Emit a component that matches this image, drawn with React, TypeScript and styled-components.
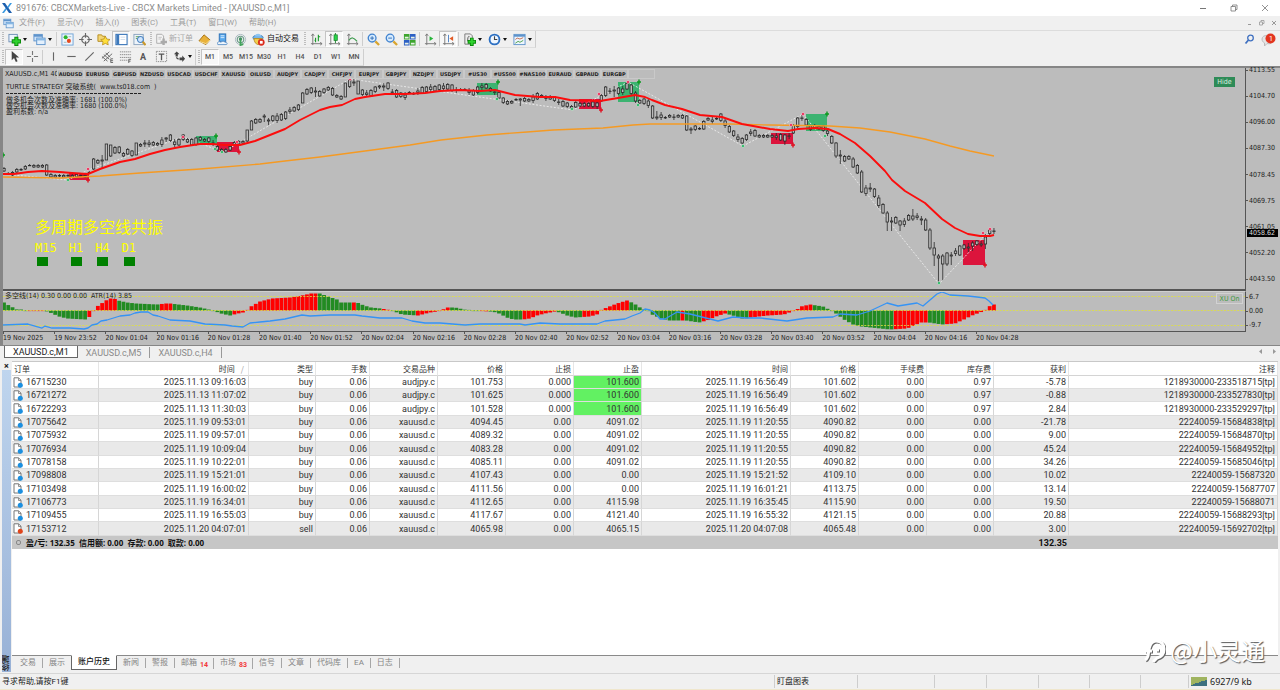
import React from 'react';
import styled, { createGlobalStyle, css } from 'styled-components';

const Global = createGlobalStyle`
  *, *::before, *::after { box-sizing: border-box; }
  body {
    margin: 0;
    background: #f0f0f0;
    font: 8px/10px Roboto, "Noto Sans CJK SC", sans-serif;
    color: #333;
  }
  button { font: inherit; color: inherit; background: none; border: 0; padding: 0; margin: 0; }
  a { color: inherit; text-decoration: none; }
  svg { display: block; }
`;

const CHART_FONT = '"DejaVu Sans Condensed", "DejaVu Sans", "Noto Sans CJK SC", sans-serif';

const Window = styled.div`
  display: flex;
  flex-direction: column;
  min-height: 100vh;
  position: relative;
  border-bottom: 1px solid #efe6cc;
`;

/* ---------- title and menu ---------- */

const TitleBar = styled.header`
  display: flex;
  align-items: center;
  height: 16px;
  padding-left: 2px;
  background: #fff;
  color: #8c8c8c;
`;
const Title = styled.h1`
  margin: 0 auto 0 4px;
  font: 400 9px/12px Roboto, sans-serif;
`;
const CaptionButton = styled.button`
  display: grid;
  place-items: center;
  width: 31px;
  height: 16px;
`;
const MenuBar = styled.nav`
  display: flex;
  align-items: center;
  height: 15px;
  padding-left: 3px;
  border-bottom: 1px solid #dcdcdc;
  color: #9a9a9a;
`;
const MenuItem = styled.button`
  margin-left: 12px;
  &:first-of-type { margin-left: 5px; }
`;
const MdiButtons = styled.div`
  display: flex;
  margin-left: auto;
`;
const MdiButton = styled.button`
  display: grid;
  place-items: center;
  width: 12px;
  height: 12px;
`;

/* ---------- toolbars ---------- */

const ToolRow = styled.div<{ $h: number }>`
  display: flex;
  align-items: center;
  height: ${p => p.$h}px;
`;
const ToolGroup = styled.div`
  display: flex;
  align-items: center;
  height: 17px;
  border-right: 1px solid #cfcfcf;
  border-bottom: 1px solid #dedede;
`;
const Grip = styled.span`
  width: 2px;
  height: 14px;
  margin: 0 1px 0 2px;
  background: repeating-linear-gradient(#bdbdbd 0 1px, #f0f0f0 1px 2px);
`;
const Sep = styled.span`
  width: 1px;
  height: 14px;
  margin: 0 1px;
  background: #cdcdcd;
`;
const ToolButton = styled.button<{ $on?: boolean; $w?: number }>`
  display: flex;
  align-items: center;
  justify-content: center;
  gap: 2px;
  flex: none;
  width: ${p => p.$w ?? 18}px;
  height: 16px;
  border: 1px solid transparent;
  ${p => p.$on && css`
    background: #f8f8f8;
    border-color: #c4c4c4 #fff #fff #c4c4c4;
  `}
`;
const TextTool = styled(ToolButton)<{ $dim?: boolean }>`
  width: auto;
  padding: 0 ${p => (p.$dim ? 1 : 2)}px;
  color: ${p => (p.$dim ? '#a8a8a8' : '#111')};
`;
const Period = styled(ToolButton)`
  font: 500 7px/10px Roboto, sans-serif;
  color: #555;
`;
const LetterTool = styled(ToolButton)`
  font: 700 9px/10px Roboto, sans-serif;
  color: #555;
`;
const Caret = styled.span`
  border: 2px solid transparent;
  border-top: 3px solid #111;
  border-bottom: 0;
`;
const ToolEnd = styled.div`
  display: flex;
  align-items: center;
  gap: 6px;
  margin-left: auto;
  padding-right: 4px;
`;

/* ---------- chart window ---------- */

const ChartWindow = styled.main`
  display: grid;
  grid-template-columns: minmax(0, 1fr) 34px;
  grid-template-rows: 223px 41px 13px;
  border: solid #868686;
  border-width: 2px 0 1px 3px;
  background: #bcbcbc;
  color: #222;
  font: 7px/8px ${CHART_FONT};
`;
const Pane = styled.section<{ $last?: boolean }>`
  position: relative;
  overflow: hidden;
  border-right: 1px solid #555;
  border-bottom: ${p => (p.$last ? '1px' : '2px')} solid #555;
  border-top: ${p => (p.$last ? '1px' : '0')} solid #d0d0d0;
`;
const PlotSvg = styled.svg`
  position: absolute;
  inset: 0;
  width: 100%;
  height: 100%;
`;
const ChartHeading = styled.div`
  position: absolute;
  left: 2px;
  top: 1px;
  right: 0;
  display: flex;
  white-space: pre;
`;
const SymbolName = styled.span`
  width: 52px;
  line-height: 10px;
`;
const SymbolStrip = styled.div`
  display: grid;
  grid-template-columns: repeat(22, 1fr);
  width: 598px;
`;
const SymbolButton = styled.button`
  height: 10px;
  border: 1px solid #c9c9c9;
  font: 700 5px/8px "DejaVu Sans", sans-serif;
  color: #222;
`;
const Strategy = styled.div`
  position: absolute;
  left: 3px;
  top: 15px;
  white-space: pre;
`;
const StrategyTitle = styled.p`
  margin: 0;
  line-height: 8px;
`;
const StrategyRule = styled.div`
  width: 135px;
  height: 1px;
  margin: 2px 0 3px;
  background: repeating-linear-gradient(90deg, #222 0 3px, transparent 3px 4px);
`;
const StrategyLine = styled.p`
  margin: 0;
  line-height: 6px;
`;
const Resonance = styled.div`
  position: absolute;
  left: 32px;
  top: 148px;
  color: #ff0;
`;
const ResonanceTitle = styled.p`
  margin: 0;
  font: 400 16px/20px "Noto Sans CJK SC", sans-serif;
`;
const FrameList = styled.ul`
  display: flex;
  gap: 12px;
  margin: 5px 0 0;
  padding: 0;
  list-style: none;
  font: 12px/14px "DejaVu Sans Mono", monospace;
`;
const Frame = styled.li`
  &::after {
    content: "";
    display: block;
    width: 11px;
    height: 9px;
    margin: 2px 0 0 2px;
    background: #008000;
  }
`;
const HideButton = styled.button`
  position: absolute;
  right: 10px;
  top: 9px;
  width: 21px;
  height: 10px;
  background: #2e8b57;
  color: #dcefe2;
`;
const XuButton = styled.button`
  position: absolute;
  right: 2px;
  top: 1px;
  width: 27px;
  height: 11px;
  border: 1px solid #d2d2d2;
  background: #bcbcbc;
  color: #3c9a3c;
`;
const IndicatorLabel = styled.p`
  position: absolute;
  left: 2px;
  top: 0;
  margin: 0;
  white-space: pre;
`;
const PriceAxis = styled.div`
  position: relative;
  display: flex;
  flex-direction: column;
  justify-content: space-between;
  height: 213px;
  line-height: 4px;
`;
const RangeAxis = styled(PriceAxis)`
  height: 36px;
  padding: 4px 0 0;
`;
const Tick = styled.span`
  display: flex;
  align-items: center;
  gap: 1px;
  &::before { content: ""; width: 2px; height: 1px; background: #555; }
`;
const LastPrice = styled.span`
  position: absolute;
  left: 1px;
  top: 161px;
  width: 31px;
  padding-left: 2px;
  line-height: 8px;
  background: #000;
  color: #ddd;
`;
const TimeAxis = styled.div`
  grid-column: 1 / -1;
  display: grid;
  grid-template-columns: repeat(24, 1fr);
  padding-right: 48px;
  white-space: nowrap;
`;
const TimeLabel = styled.span`
  line-height: 8px;
  &::before { content: ""; display: block; width: 1px; height: 2px; background: #555; }
`;

const ChartTabs = styled.nav`
  display: flex;
  align-items: flex-start;
  height: 15px;
  padding-left: 4px;
  font: 9px/12px Roboto, sans-serif;
`;
const ChartTab = styled.button<{ $on?: boolean }>`
  height: 11px;
  margin: 1px 0;
  padding: 0 8px;
  border-right: 1px solid #999;
  color: #8a8a8a;
  ${p => p.$on && css`
    height: 12px;
    margin: 0;
    border: 1px solid #666;
    border-top: 0;
    background: #fff;
    color: #222;
  `}
`;
const Scrollers = styled.div`
  display: flex;
  gap: 9px;
  margin: 3px 4px 0 auto;
`;

/* ---------- terminal ---------- */

const Terminal = styled.section`
  flex: 1;
  display: grid;
  grid-template-columns: 12px minmax(0, 1fr);
  margin-right: 2px;
`;
const Rail = styled.aside`
  display: flex;
  flex-direction: column;
  padding: 0 1px 1px 2px;
`;
const RailClose = styled.button`
  height: 9px;
  font: 700 9px/8px Roboto, sans-serif;
  color: #222;
`;
const RailName = styled.div`
  flex: 1;
  padding-top: 1px;
  writing-mode: vertical-rl;
  transform: rotate(180deg);
  font-weight: 500;
  background: linear-gradient(#98b1d6, #bfd5ee);
  color: #222;
`;
const Sheet = styled.div`
  display: flex;
  flex-direction: column;
  background: #fff;
  border-top: 1px solid #c8c8c8;
`;
const Table = styled.table`
  width: 100%;
  table-layout: fixed;
  border-collapse: separate;
  border-spacing: 0;
  font: 9px/12px Roboto, sans-serif;
`;
const Th = styled.th`
  height: 14px;
  padding: 0 2px;
  border-right: 1px solid #e6e6e6;
  border-bottom: 1px solid #d4d4d4;
  font: 400 8px/12px "Noto Sans CJK SC", sans-serif;
  text-align: right;
  &:first-child { text-align: left; }
`;
const SortMark = styled.span`
  padding: 0 2px 0 6px;
  color: #999;
`;
const Row = styled.tr`
  height: 13px;
  &:nth-child(3n) { height: 14px; }
  &:nth-child(even) { background: #e9e9e9; }
`;
const Td = styled.td<{ $hit?: boolean }>`
  padding: 0 2px 0 0;
  border-right: 1px solid #d6d6d6;
  border-bottom: 1px solid #dedede;
  text-align: right;
  white-space: nowrap;
  overflow: hidden;
  ${p => p.$hit && css`background: #62f162;`}
`;
const OrderCell = styled.span`
  display: flex;
  align-items: center;
  gap: 3px;
  padding-left: 1px;
`;
const SumRow = styled.tr`
  height: 13px;
  background: #c6c6c6;
  font: 700 9px/12px Roboto, "Noto Sans CJK SC", sans-serif;
  color: #111;
`;
const SumCell = styled.td`
  padding: 0 2px 0 0;
  text-align: right;
`;
const SumText = styled.span`
  display: flex;
  align-items: center;
  gap: 5px;
  padding-left: 4px;
  white-space: pre;
  font: 700 8px/12px "Noto Sans", "Noto Sans CJK SC", sans-serif;
`;
const SumDot = styled.i`
  width: 5px;
  height: 5px;
  border: 1px solid #888;
  border-radius: 2px;
`;
const BottomTabs = styled.nav`
  display: flex;
  align-items: center;
  height: 18px;
  margin-top: auto;
  padding-bottom: 3px;
  border-top: 1px solid #8a8a8a;
  background: #f0f0f0;
  color: #858585;
`;
const BottomTab = styled.a<{ $on?: boolean }>`
  display: flex;
  padding: 0 6px;
  border-right: 1px solid #a6a6a6;
  &:first-child { padding-left: 8px; }
  ${p => p.$on && css`
    align-self: flex-start;
    margin-top: -1px;
    margin-left: -1px;
    padding: 1px 6px 2px;
    border: 1px solid #666;
    border-top: 1px solid #fff;
    background: #fff;
    color: #111;
    font-weight: 500;
  `}
`;
const Count = styled.sup`
  margin: 3px -1px 0 3px;
  font: 700 7px/8px Roboto, sans-serif;
  color: #f23a3a;
`;

const StatusBar = styled.footer`
  display: flex;
  align-items: center;
  height: 16px;
  border-top: 1px solid #d6d6d6;
  color: #222;
`;
const StatusCell = styled.span<{ $w?: number }>`
  display: flex;
  align-items: center;
  gap: 2px;
  flex: ${p => (p.$w ? `0 0 ${p.$w}px` : '1')};
  height: 13px;
  padding-left: 2px;
  border-left: 1px solid #cdcdcd;
  &:first-child { border-left: 0; }
`;
const Traffic = styled.span`
  font: 9px/12px "Noto Sans", sans-serif;
`;
const Watermark = styled.div`
  position: absolute;
  right: 15px;
  bottom: 24px;
  display: flex;
  align-items: center;
  gap: 4px;
  color: #fff;
  font: 24px/30px "Noto Sans CJK SC", sans-serif;
  text-shadow: 1px 1px 1px #555;
`;

/* ---------- chart data ---------- */

const STEP = 4.267;
const barX = (i: number) => 4 + STEP * i;

// high, low and, for long shadows, the body's top and bottom
type Bar = [number, number, number?, number?];
const bars: Bar[] = [
  [167,172],[172,175],[171,176],[168,173],[168,171],[165,170],[164,166],[164,168],[164,168],[164,168],
  [164,176,165,175],[173,178],[174,178],[174,177],[174,178],[174,177],[174,178],[173,178],[174,177],[174,178],
  [171,174],[158,170,159,169],[159,164],[155,168,160,161],[144,160,144,160],[145,157,145,156],[146,154],[146,154],[152,157],[148,155],
  [150,157],[143,155,143,155],[143,147],[140,147,143,144],[140,147],[141,146],[142,146],[137,147],[137,142,138,139],[134,142],
  [139,147],[138,146],[134,141],[138,143],[138,146],[137,146],[136,141],[138,142],[137,143],[140,146],
  [145,151],[148,152],[148,153],[145,151],[141,146],[140,145],[140,144],[130,142,130,141],[120,130,121,130],[118,124],
  [118,123],[114,122,116,117],[118,125,120,121],[115,122],[113,123],[113,121],[111,120],[107,114],[106,112],[104,111],
  [92,103,93,103],[88,95],[87,94],[87,97,91,92],[90,97],[88,94],[86,91],[87,96],[94,98],[95,100],
  [83,97,83,97],[79,88],[79,86,82,83],[81,94,81,94],[89,96],[90,97],[89,97],[86,93],[85,89,86,87],[83,91,86,87],
  [82,90],[89,95],[89,98],[92,98],[92,100],[91,94],[92,95],[88,95],[86,94],[86,93],
  [84,92],[85,92],[84,91],[83,91],[83,90],[84,92],[87,93],[88,91],[88,91],[88,95],
  [89,96],[86,94],[83,90],[83,89],[87,92],[89,95],[91,99],[97,104],[100,105],[100,104],
  [98,101],[98,106,99,100],[97,102],[98,102],[94,103],[92,100],[94,98],[95,101],[95,100],[96,102],
  [99,105],[100,107],[102,108],[105,109],[101,108],[102,107],[102,107],[102,107],[101,108],[100,109],
  [94,102],[86,97],[88,94],[86,97,90,91],[87,95],[86,95],[82,90],[84,95],[91,103,93,101],[99,104],
  [98,105],[98,108],[105,119,106,118],[111,120,117,118],[112,120],[116,119],[114,118],[114,120],[114,118],[114,119],
  [115,131,116,130],[127,134,129,130],[125,131],[127,130],[120,130],[117,121],[117,124],[117,120],[113,122],[118,128],
  [125,133],[130,137],[134,142],[137,144],[134,141],[129,136],[129,137],[134,138],[134,138],[134,138],
  [134,138],[133,140],[133,141],[134,145,135,141],[133,139],[124,134],[117,128],[115,121],[118,126],[125,131],
  [124,129],[125,130],[125,132],[128,136],[135,144],[142,158,143,156],[150,164,155,156],[155,162],[155,160],[157,168,159,167],
  [164,174],[170,193,172,192],[185,196],[183,192,188,189],[188,198],[195,208],[203,214],[211,231,213,222],[217,231,221,222],[216,224],
  [220,231,221,225],[218,227],[214,221],[209,221,216,219],[213,220],[216,225,219,220],[218,231,220,230],[228,250,230,248],[242,266,248,255],[254,284,256,258],
  [254,280,256,264],[252,266,253,264],[252,265,255,256],[248,256],[245,256,246,255],[244,250],[243,252,247,248],[241,251,243,246],[240,246],[241,247,244,245],
  [234,249,237,244],[229,235],[228,234],
];

// oscillator: x position and signed height in pixels
const oscKeys: [number, number][] = [
  [4,8],[9,5],[13,3],[17,1],[21,1],[25,0],[44,0],[50,-2],[59,-6],[67,-8],[85,-9],[89,-7],[93,-1],[97,4],[106,10],[110,12],
  [114,12],[118,10],[127,8],[136,7],[157,6],[166,7],[170,7],[187,5],[200,3],[213,0],[221,-3],[230,-5],[238,-3],[243,-2],
  [247,0],[251,4],[260,9],[272,12],[290,13],[302,15],[311,17],[321,17],[325,15],[331,13],[337,11],[341,8],[357,8],
  [364,5],[371,3],[381,2],[392,0],[397,-2],[402,-4],[418,-5],[430,-2],[437,-1],[443,1],[447,3],[455,3],[464,1],[470,0],[490,-1],
  [497,-2],[503,-5],[509,-8],[515,-9],[523,-9],[530,-8],[537,-5],[545,-3],[555,-1],[560,-2],[567,-5],[575,-7],[590,-6],
  [597,-4],[602,1],[607,3],[617,7],[627,10],[634,7],[640,3],[644,1],[648,0],[652,-4],[661,-8],[669,-10],[686,-10],[699,-12],
  [707,-10],[716,-6],[725,-3],[733,-5],[742,-8],[746,-8],[750,-7],[768,-5],[784,-4],[792,-1],[797,1],[801,4],[810,6],[823,4],
  [831,0],[836,-3],[844,-9],[853,-14],[861,-16],[890,-19],[907,-18],[921,-12],[929,-12],[942,-14],[955,-13],[964,-9],[972,-5],
  [980,-2],[985,0],[989,4],[993,6],[998,6],
];
// ranges of x where the oscillator is drawn red
const redRanges: [number, number][] = [
  [26,44],[87,116],[159,173],[232,316],[350,357],[382,389],[415,449],[478,490],[522,557],[582,628],[680,683],[702,726],
  [749,811],[893,926],[943,1000],
];
const oscAt = (x: number) => {
  const k = oscKeys.findIndex(p => p[0] >= x);
  if (k <= 0) return oscKeys[0][1];
  const [x0, y0] = oscKeys[k - 1];
  const [x1, y1] = oscKeys[k];
  return y0 + ((y1 - y0) * (x - x0)) / (x1 - x0);
};

const fastLine =
  '3,174 14,174 28,172 42,171 60,172 72,173 88,174 100,169 120,162 135,159 150,154 165,150 180,147 200,144 212,144 225,145 240,145 255,141 270,135 285,129 300,120 320,110 330,107 342,105 355,99 365,97 385,94 405,94 425,93 440,91 460,90 480,91 495,90 503,92 515,95 540,97 555,97 570,100 600,101 618,98 635,95 645,97 652,100 665,105 682,109 700,115 722,117 742,124 770,129 788,131 798,129 815,128 828,129 840,134 855,143 870,156 885,171 892,180 905,191 925,203 942,219 955,228 968,234 980,236 990,236 994,235';
const slowLine =
  '3,177 60,178 100,176 140,173 200,169 260,164 285,161 320,157 350,153 380,149 410,145 441,140 487,135 527,132 553,130 603,128 633,125 650,124 730,124 770,125 830,126 860,128 890,132 925,139 950,146 970,151 994,156';
const atrLine =
  '3,325 28,324 42,328 45,326 52,328 70,328 84,329 88,328 92,325 97,324 101,321 107,320 120,316 130,315 135,313 141,312 148,312 153,315 158,316 170,320 190,321 205,324 225,325 232,326 243,327 250,323 260,322 270,321 285,319 302,315 310,316 330,315 355,315 362,316 380,318 402,318 412,321 425,323 440,323 465,325 480,324 520,324 525,325 540,323 560,324 597,324 605,321 625,319 632,316 640,313 645,309 650,310 655,313 660,319 665,319 677,312 690,314 702,317 718,321 733,317 747,318 760,318 787,321 807,318 833,317 840,314 857,315 870,311 887,303 898,306 917,303 923,306 937,294 942,292 950,295 968,296 977,297 985,298 989,301 993,305';
const zigzag = '3,174 68,180 88,170 183,137 223,152 350,79 573,110 628,82 743,146 803,114 939,284 991,229';

const zones: [number, number, number, number, boolean][] = [
  [69,173,20,7,false],[196,136,21,9,true],[217,142,22,10,false],[477,83,21,12,true],[579,99,22,10,false],
  [618,82,21,20,true],[771,133,22,11,false],[806,114,21,17,true],[963,240,22,25,false],
];
const crosses: [number, number, boolean][] = [
  [3,155,true],[216,136,true],[498,82,true],[639,82,true],[827,114,true],
  [88,180,false],[239,152,false],[601,110,false],[793,145,false],[985,265,false],
];
const dots: [number, number, boolean][] = [
  [68,180,true],[215,149,true],[222,152,true],[497,99,true],[572,109,true],[638,105,true],[743,146,true],[825,136,true],[939,283,true],
  [88,169,false],[183,137,false],[237,142,false],[350,79,false],[599,94,false],[628,82,false],[791,125,false],[803,114,false],[983,233,false],[990,229,false],
];

const PricePlot = () => (
  <PlotSvg aria-hidden="true">
    <g transform="translate(-3 -68)">
      {zones.map(([x, y, w, h, up]) => (
        <rect key={x} x={x} y={y} width={w} height={h} fill={up ? '#3cb371' : '#dc143c'} />
      ))}
      <polyline points={zigzag} fill="none" stroke="#ececec" strokeWidth="0.9" strokeDasharray="2 1.6" />
      {bars.map(([hi, lo, top, bottom], i) => {
        const span = lo - hi;
        const a = top ?? hi + (span > 5 ? [1, 3, 1.5][i % 3] : 1.4);
        const b = bottom ?? lo - (span > 5 ? [1.5, 1, 2.5][(i * 2) % 3] : 1);
        const x = barX(i);
        return (
          <g key={i} stroke="#2a2a2a" strokeWidth="0.8" fill="#bcbcbc">
            <path d={`M${x} ${hi}V${lo}`} />
            <rect x={x - 1.2} y={a} width="2.4" height={Math.max(b - a, 0.4)} />
          </g>
        );
      })}
      <polyline points={slowLine} fill="none" stroke="#f59a23" strokeWidth="1.3" />
      <polyline points={fastLine} fill="none" stroke="#fb0d0d" strokeWidth="1.9" strokeLinejoin="round" />
      {crosses.map(([x, y, up]) => (
        <path key={`${x}-${y}`} d={`M${x - 2} ${y}h4M${x} ${y - 2.5}v5`} stroke={up ? '#0a9a1e' : '#e01020'} strokeWidth="1.4" />
      ))}
      {dots.map(([x, y, up]) => (
        <circle key={`${x}-${y}`} cx={x} cy={y} r="1.5" fill={up ? '#16b85a' : '#f0184a'} stroke="#e6dede" strokeWidth="0.6" />
      ))}
    </g>
  </PlotSvg>
);

const OscPlot = () => (
  <PlotSvg aria-hidden="true">
    <g transform="translate(-3 -292)">
      {bars.map((_, i) => {
        const x = barX(i);
        const v = oscAt(x);
        const red = redRanges.some(([a, b]) => x >= a && x <= b);
        const h = Math.max(Math.abs(v), 0.6);
        return <rect key={i} x={x - 1.9} y={v > 0 ? 310.5 - h : 310.5} width="3.8" height={h} fill={red ? '#ff0000' : '#228b22'} />;
      })}
      <path d="M3 296.500H3000M3 310.500H3000M3 325.500H3000" stroke="#e2e23c" strokeWidth="0.8" strokeDasharray="2 1.3" />
      <polyline points={atrLine} fill="none" stroke="#3593f5" strokeWidth="1.3" strokeLinejoin="round" />
    </g>
  </PlotSvg>
);

/* ---------- icons ---------- */

const Icon = ({ children, s = 13 }: { children: React.ReactNode; s?: number }) => (
  <svg width={s} height={s} viewBox="0 0 14 14" fill="none" aria-hidden="true">{children}</svg>
);
const axes = <path d="M3 1v12M1 11.500h12M1.500 3 3 1l1.500 2M11 10l2 1.500-2 1.500" stroke="#777" />;
const icons: Record<string, React.ReactNode> = {
  newChart: <><rect x="1" y="1.500" width="9" height="8" fill="#eef6ff" stroke="#6d8fb5" /><path d="M9 4v10M4 9h10" stroke="#0a8a0a" strokeWidth="4.400" /><path d="M9 5v8M5 9h8" stroke="#2fd22f" strokeWidth="2.400" /></>,
  profiles: <><rect x="1" y="1.500" width="9" height="7" fill="#cfe4fa" stroke="#5e93cb" /><path d="M1 3h9" stroke="#5e93cb" strokeWidth="2" /><rect x="4" y="5.500" width="9" height="7" fill="#e4f0fc" stroke="#5e93cb" /><path d="M4 7h9" stroke="#86b8e6" strokeWidth="2" /></>,
  market: <><rect x="1" y="1" width="12" height="12" fill="#eef5fd" stroke="#6fa3d6" /><circle cx="5" cy="4.500" r="2.200" fill="#2db52d" /><circle cx="8.500" cy="8.500" r="2.200" fill="#e54a1f" /><path d="M8 4h3M3 10h3" stroke="#9bb" /></>,
  target: <><circle cx="7" cy="7" r="4" stroke="#666" strokeWidth="1.300" /><path d="M7 0v5M7 9v5M0 7h5M9 7h5" stroke="#666" strokeWidth="1.200" /></>,
  favorites: <><path d="M1 2h4l1 1.500h3V9H1z" fill="#f4d673" stroke="#b48a1e" /><path d="m9 3.500 1.600 3 3.400.500-2.500 2.400.600 3.400L9 11.200l-3.100 1.600.600-3.400L4 7l3.400-.500z" fill="#ffdf3a" stroke="#b48a1e" strokeWidth=".8" /></>,
  navigator: <><rect x="1" y="1.500" width="12" height="11" fill="#fff" stroke="#3e79bb" strokeWidth="1.200" /><path d="M3 2v10" stroke="#3e79bb" strokeWidth="3" /><path d="M6 4.500h5M6 7h5" stroke="#cfdcea" /></>,
  tester: <><rect x="1" y="1.500" width="10" height="11" fill="#eef4fa" stroke="#8aa4be" /><path d="M3 4h5M3 6h3" stroke="#5b9d4c" /><circle cx="8" cy="7" r="3.200" fill="#cfe5fb" stroke="#4d86c4" strokeWidth="1.200" /><path d="m10.500 9.500 3 3.500" stroke="#c9982c" strokeWidth="2.400" /></>,
  order: <><path d="M2 1.500h6l2 2V12H2z" fill="#f4f4f4" stroke="#a5a5a5" /><path d="M4 5h4M4 7h3" stroke="#bbb" /><path d="M10 6.500v7.500M6.500 10.500h7.500" stroke="#aaa" strokeWidth="2.800" /></>,
  gold: <><path d="M1 8.500 6.500 2 13 7.500l-4.500 5z" fill="#e8b13a" stroke="#a56f10" /><path d="m1.500 9 7 2.500L13 7.500" stroke="#fbe39a" /></>,
  vps: <><rect x="3.500" y="1" width="7" height="8" fill="#58a8ec" stroke="#2a6fb5" /><path d="M5 3h4M5 5h4" stroke="#dff0ff" /><path d="M2 12.500c-1.500-3 2-4 3-2.500 2-2 4-1 4.500 0 3-.500 3 2.500 1.500 2.500z" fill="#eef5fc" stroke="#5f93c9" /></>,
  signal: <><circle cx="7" cy="7" r="5.500" stroke="#a9b8bf" /><circle cx="7" cy="7" r="3.500" stroke="#6c9a88" strokeWidth="1.200" /><circle cx="7" cy="6.500" r="1.800" fill="#3f8f5f" /><path d="M7 7v6l3-1" stroke="#44a35c" strokeWidth="2" /></>,
  auto: <><ellipse cx="6.500" cy="5" rx="5.500" ry="2.500" fill="#76b5ea" stroke="#3e7fb8" /><path d="M3 3.500C4 0 9 0 10 3.500z" fill="#8cc4f2" /><path d="M2 6c1 6 4 7 6 6l3-6z" fill="#f2cf4e" stroke="#b98d1f" /><circle cx="10" cy="10" r="3.600" fill="#db2b1d" /><rect x="8.500" y="8.500" width="3" height="3" fill="#fff" /></>,
  barChart: <>{axes}<path d="M6 5v5M5 8h1M9 2v7M9 4h2" stroke="#1d9b2c" strokeWidth="1.200" /></>,
  candleChart: <>{axes}<path d="M8 0v11" stroke="#1d7f2c" /><rect x="6.500" y="2" width="3.500" height="6" fill="#28d648" stroke="#1d7f2c" strokeWidth=".8" /></>,
  lineChart: <>{axes}<path d="M3 8c3-4 5-3.500 9 1" stroke="#3c9a4c" strokeWidth="1.200" /></>,
  zoomIn: <><circle cx="5.500" cy="5.500" r="4.200" fill="#d5eafe" stroke="#3f82cf" strokeWidth="1.400" /><path d="m9 9 4 4" stroke="#d9a52f" strokeWidth="2.400" /><path d="M3.500 5.500h4M5.500 3.500v4" stroke="#2e6bb3" /></>,
  zoomOut: <><circle cx="5.500" cy="5.500" r="4.200" fill="#d5eafe" stroke="#3f82cf" strokeWidth="1.400" /><path d="m9 9 4 4" stroke="#d9a52f" strokeWidth="2.400" /><path d="M3.500 5.500h4" stroke="#2e6bb3" /></>,
  tile: <><path d="M1 1h6v6H1zM7.500 7.500h6v6h-6z" fill="#3da52e" /><path d="M7.500 1h6v6h-6zM1 7.500h6v6H1z" fill="#2c5fc4" /><path d="M2 4h4v2H2zM8.500 4h4v2h-4zM2 10.500h4v2H2zM8.500 10.500h4v2h-4z" fill="#e6f1e6" /></>,
  scroll: <>{axes}<path d="M6 3.500v5L10 6z" fill="#27b53a" /></>,
  shift: <>{axes}<path d="M7 2v8" stroke="#4a80c4" /><path d="M12 3.500v5L8 6z" fill="#e25a25" /></>,
  indicators: <><path d="M2 1h6l2 2v9H2z" fill="#eee" stroke="#777" /><path d="M5 9c0-5 1-6 2-5" stroke="#555" /><path d="M9.500 5v9M5 9.500h9" stroke="#0a8a0a" strokeWidth="4" /><path d="M9.500 6v7M6 9.500h7" stroke="#2fd22f" strokeWidth="2.200" /></>,
  clock: <><circle cx="7" cy="7" r="5.300" fill="#eef6ff" stroke="#2b6fc2" strokeWidth="2" /><path d="M7 3.500V7h3" stroke="#444" strokeWidth="1.200" /></>,
  template: <><rect x="1" y="1.500" width="12" height="11" fill="#eef5fd" stroke="#5e93cb" /><path d="M1 3h12" stroke="#5e93cb" strokeWidth="2" /><path d="m2.500 7 2-1.500 3 1 3.500-1.500" stroke="#c06b50" /><path d="m2.500 11 3-2 2 1 3.500-2" stroke="#4ca04c" /></>,
  cursor: <path d="M4 1v10l2.500-2.500L8.500 13l1.800-.900L8.500 8H12z" fill="#444" />,
  cross: <path d="M7 1v4.500M7 8.500V13M1 7h4.500M8.500 7H13" stroke="#777" strokeWidth="1.200" />,
  vline: <path d="M7 2.500v9" stroke="#666" strokeWidth="1.200" />,
  hline: <path d="M2.500 7h9" stroke="#666" strokeWidth="1.200" />,
  trend: <path d="m2.500 11.500 9-9" stroke="#666" strokeWidth="1.200" />,
  channel: <><path d="m1 9 8-7M3 12l9-8M1 7l6 5M5 3l5 5M3 5l6 5" stroke="#666" /><path d="M13 9.500h-2.500v4H13M10.500 11.500H13" stroke="#444" strokeWidth=".8" /></>,
  fibo: <><path d="M1 2h12M1 5h12M1 8h12M1 11h8" stroke="#888" strokeDasharray="1.500 .7" /><path d="M13 10h-2.500v4M10.500 12h2" stroke="#444" strokeWidth=".8" /></>,
  label: <><rect x="1.500" y="1.500" width="11" height="11" stroke="#888" strokeDasharray="1.500 1" /><path d="M4 4.500h6M7 4.500V11" stroke="#555" strokeWidth="1.400" /></>,
  arrows: <><path d="m1 4.500 3-3 3 3H5.200V7H2.800V4.500z" fill="#444" /><path d="M7 8h3V6l3 3.500L10 13v-2H7z" fill="#444" /><path d="m3.500 8 2.500 2" stroke="#444" strokeWidth="1.300" /></>,
};

const Tool = ({ name, label, on, drop }: { name: string; label: string; on?: boolean; drop?: boolean }) => (
  <ToolButton aria-label={label} $on={on} $w={drop ? 25 : 18}>
    <Icon>{icons[name]}</Icon>
    {drop && <Caret />}
  </ToolButton>
);

const OrderIcon = ({ sell }: { sell?: boolean }) => (
  <svg width="10" height="11" viewBox="0 0 10 11" fill="none" aria-hidden="true">
    <path d="M1 .800h4.500L8 3.200V10H1z" fill="#fff" stroke="#777" />
    <path d="M5.500 1v2.500H8" stroke="#777" strokeWidth=".8" />
    <circle cx="7.300" cy="8.300" r="2.500" fill={sell ? '#e0441a' : '#1b8fe0'} />
  </svg>
);

/* ---------- page data ---------- */

const menus = ['文件(F)', '显示(V)', '插入(I)', '图表(C)', '工具(T)', '窗口(W)', '帮助(H)'];
const periods = ['M1', 'M5', 'M15', 'M30', 'H1', 'H4', 'D1', 'W1', 'MN'];
const symbols = [
  'AUDUSD', 'EURUSD', 'GBPUSD', 'NZDUSD', 'USDCAD', 'USDCHF', 'XAUUSD', 'OILUSD', 'AUDJPY', 'CADJPY', 'CHFJPY',
  'EURJPY', 'GBPJPY', 'NZDJPY', 'USDJPY', '#US30', '#US500', '#NAS100', 'EURAUD', 'GBPAUD', 'EURGBP', '',
];
const prices = ['4113.55', '4104.70', '4096.00', '4087.30', '4078.45', '4069.75', '4061.05', '4052.20', '4043.50'];
const times = [
  '19 Nov 2025', '19 Nov 23:52', '20 Nov 01:04', '20 Nov 01:16', '20 Nov 01:28', '20 Nov 01:40', '20 Nov 01:52',
  '20 Nov 02:04', '20 Nov 02:16', '20 Nov 02:28', '20 Nov 02:40', '20 Nov 02:52', '20 Nov 03:04', '20 Nov 03:16',
  '20 Nov 03:28', '20 Nov 03:40', '20 Nov 03:52', '20 Nov 04:04', '20 Nov 04:16', '20 Nov 04:28',
];
const columns: [string, number?][] = [
  ['订单', 87], ['时间', 150], ['类型', 67], ['手数', 54], ['交易品种', 68], ['价格', 68], ['止损', 68], ['止盈', 68],
  ['时间', 149], ['价格', 68], ['手续费', 68], ['库存费', 67], ['获利', 75], ['注释'],
];
const orders = `16715230|2025.11.13 09:16:03|buy|0.06|audjpy.c|101.753|0.000|101.600|2025.11.19 16:56:49|101.602|0.00|0.97|-5.78|1218930000-233518715[tp]
16721272|2025.11.13 11:07:02|buy|0.06|audjpy.c|101.625|0.000|101.600|2025.11.19 16:56:49|101.602|0.00|0.97|-0.88|1218930000-233527830[tp]
16722293|2025.11.13 11:30:03|buy|0.06|audjpy.c|101.528|0.000|101.600|2025.11.19 16:56:49|101.602|0.00|0.97|2.84|1218930000-233529297[tp]
17075642|2025.11.19 09:53:01|buy|0.06|xauusd.c|4094.45|0.00|4091.02|2025.11.19 11:20:55|4090.82|0.00|0.00|-21.78|22240059-15684838[tp]
17075932|2025.11.19 09:57:01|buy|0.06|xauusd.c|4089.32|0.00|4091.02|2025.11.19 11:20:55|4090.82|0.00|0.00|9.00|22240059-15684870[tp]
17076934|2025.11.19 10:09:04|buy|0.06|xauusd.c|4083.28|0.00|4091.02|2025.11.19 11:20:55|4090.82|0.00|0.00|45.24|22240059-15684952[tp]
17078158|2025.11.19 10:22:01|buy|0.06|xauusd.c|4085.11|0.00|4091.02|2025.11.19 11:20:55|4090.82|0.00|0.00|34.26|22240059-15685046[tp]
17098808|2025.11.19 15:21:01|buy|0.06|xauusd.c|4107.43|0.00|0.00|2025.11.19 15:21:52|4109.10|0.00|0.00|10.02|22240059-15687320
17103498|2025.11.19 16:00:02|buy|0.06|xauusd.c|4111.56|0.00|0.00|2025.11.19 16:01:21|4113.75|0.00|0.00|13.14|22240059-15687707
17106773|2025.11.19 16:34:01|buy|0.06|xauusd.c|4112.65|0.00|4115.98|2025.11.19 16:35:45|4115.90|0.00|0.00|19.50|22240059-15688071
17109455|2025.11.19 16:55:03|buy|0.06|xauusd.c|4117.67|0.00|4121.40|2025.11.19 16:55:32|4121.15|0.00|0.00|20.88|22240059-15688293[tp]
17153712|2025.11.20 04:07:01|sell|0.06|xauusd.c|4065.98|0.00|4065.15|2025.11.20 04:07:08|4065.48|0.00|0.00|3.00|22240059-15692702[tp]`
  .split('\n').map(line => line.split('|'));
const bottomTabs: [string, string?][] = [
  ['交易'], ['展示'], ['账户历史'], ['新闻'], ['警报'], ['邮箱', '14'], ['市场', '83'], ['信号'], ['文章'], ['代码库'], ['EA'], ['日志'],
];

export default function App() {
  return (
    <Window>
      <Global />
      <TitleBar>
        <svg width="10" height="10" viewBox="0 0 10 10" aria-hidden="true">
          <path d="M0 0h3l7 10H7z" fill="#1c5fae" />
          <path d="M10 0H8L5.200 4l1 1.300zM0 10h2l2.600-3.600-1-1.400z" fill="#3b9ae0" />
        </svg>
        <Title>891676: CBCXMarkets-Live - CBCX Markets Limited - [XAUUSD.c,M1]</Title>
        <CaptionButton aria-label="最小化"><svg width="8" height="8"><path d="M1 4.500h6" stroke="#777" /></svg></CaptionButton>
        <CaptionButton aria-label="还原"><svg width="8" height="8" fill="none" stroke="#777" strokeWidth=".8"><path d="M1 2.500h4.500V7H1zM2.500 2.500V1H7v4.500H5.500" /></svg></CaptionButton>
        <CaptionButton aria-label="关闭"><svg width="8" height="8"><path d="m1 1 6 6M7 1 1 7" stroke="#777" strokeWidth=".8" /></svg></CaptionButton>
      </TitleBar>
      <MenuBar>
        <Icon s={11}>{icons.profiles}</Icon>
        {menus.map(m => <MenuItem key={m}>{m}</MenuItem>)}
        <MdiButtons>
          <MdiButton aria-label="最小化图表"><svg width="6" height="6"><path d="M1 4.500h3" stroke="#999" /></svg></MdiButton>
          <MdiButton aria-label="还原图表"><svg width="6" height="6" fill="none" stroke="#999" strokeWidth=".8"><path d="M.500 2h3v3h-3zM2 2V.500h3v3H3.500" /></svg></MdiButton>
          <MdiButton aria-label="关闭图表"><svg width="6" height="6"><path d="m1 1 4 4M5 1 1 5" stroke="#999" /></svg></MdiButton>
        </MdiButtons>
      </MenuBar>

      <ToolRow $h={17}>
        <ToolGroup>
          <Grip />
          <Tool name="newChart" label="新图表" drop />
          <Tool name="profiles" label="配置文件" drop />
          <Sep />
          <Tool name="market" label="市场报价" />
          <Tool name="target" label="数据窗口" />
          <Tool name="favorites" label="收藏夹" />
          <Tool name="navigator" label="导航" on />
          <Tool name="tester" label="策略测试" />
          <Grip />
          <TextTool $dim><Icon s={12}>{icons.order}</Icon>新订单</TextTool>
          <Tool name="gold" label="MetaEditor" />
          <Tool name="vps" label="虚拟主机" />
          <Tool name="signal" label="信号" />
          <TextTool><Icon>{icons.auto}</Icon>自动交易</TextTool>
          <Grip />
          <Tool name="barChart" label="柱状图" />
          <Tool name="candleChart" label="蜡烛图" on />
          <Tool name="lineChart" label="折线图" />
          <Sep />
          <Tool name="zoomIn" label="放大" />
          <Tool name="zoomOut" label="缩小" />
          <Tool name="tile" label="平铺窗口" />
          <Sep />
          <Tool name="scroll" label="自动滚动" />
          <Tool name="shift" label="图表平移" on />
          <Sep />
          <Tool name="indicators" label="指标" drop />
          <Tool name="clock" label="时间周期" drop />
          <Tool name="template" label="模板" drop />
        </ToolGroup>
        <ToolEnd>
          <svg width="11" height="11" viewBox="0 0 11 11" fill="none" aria-hidden="true">
            <circle cx="6.500" cy="4" r="2.800" stroke="#3f70c0" strokeWidth="1.300" /><path d="m4.500 6-3 3.500" stroke="#3f70c0" strokeWidth="1.800" />
          </svg>
          <svg width="15" height="14" viewBox="0 0 15 14" aria-hidden="true">
            <path d="M1 6c0-5 11-5 11 0s-4 5-6 4.500L3.500 13V10C2 9 1 8 1 6" fill="#e4e4e4" stroke="#bbb" />
            <circle cx="9.500" cy="5.500" r="5" fill="#e2351f" />
            <text x="8" y="8" fontSize="7" fontFamily="Roboto" fill="#fff">1</text>
          </svg>
        </ToolEnd>
      </ToolRow>
      <ToolRow $h={18}>
        <ToolGroup>
          <Grip />
          <Tool name="cursor" label="光标" on />
          <Tool name="cross" label="十字准线" />
          <Sep />
          <Tool name="vline" label="垂直线" />
          <Tool name="hline" label="水平线" />
          <Tool name="trend" label="趋势线" />
          <Tool name="channel" label="通道" />
          <Tool name="fibo" label="斐波那契" />
          <LetterTool>A</LetterTool>
          <Tool name="label" label="文本标签" />
          <Tool name="arrows" label="箭头" drop />
        </ToolGroup>
        <ToolGroup>
          <Grip />
          {periods.map((p, i) => <Period key={p} $on={i === 0}>{p}</Period>)}
        </ToolGroup>
      </ToolRow>

      <ChartWindow>
        <Pane>
          <PricePlot />
          <ChartHeading>
            <SymbolName>XAUUSD.c,M1 40</SymbolName>
            <SymbolStrip>{symbols.map((s, i) => <SymbolButton key={i}>{s}</SymbolButton>)}</SymbolStrip>
          </ChartHeading>
          <Strategy>
            <StrategyTitle>TURTLE STRATEGY 突破系统(  www.ts018.com  )</StrategyTitle>
            <StrategyRule />
            <StrategyLine>做多机会次数及准确率: 1681 (100.0%)</StrategyLine>
            <StrategyLine>做空机会次数及准确率: 1680 (100.0%)</StrategyLine>
            <StrategyLine>盈利系数: n/a</StrategyLine>
          </Strategy>
          <Resonance>
            <ResonanceTitle>多周期多空线共振</ResonanceTitle>
            <FrameList>{['M15', 'H1', 'H4', 'D1'].map(f => <Frame key={f}>{f}</Frame>)}</FrameList>
          </Resonance>
          <HideButton>Hide</HideButton>
        </Pane>
        <PriceAxis>
          {prices.map(p => <Tick key={p}>{p}</Tick>)}
          <LastPrice>4058.62</LastPrice>
        </PriceAxis>
        <Pane $last>
          <OscPlot />
          <IndicatorLabel>多空线(14) 0.30 0.00 0.00  ATR(14) 3.85</IndicatorLabel>
          <XuButton>XU On</XuButton>
        </Pane>
        <RangeAxis>
          {['6.7', '0.00', '-9.7'].map(p => <Tick key={p}>{p}</Tick>)}
        </RangeAxis>
        <TimeAxis>{times.map(t => <TimeLabel key={t}>{t}</TimeLabel>)}</TimeAxis>
      </ChartWindow>

      <ChartTabs>
        <ChartTab $on>XAUUSD.c,M1</ChartTab>
        <ChartTab>XAUUSD.c,M5</ChartTab>
        <ChartTab>XAUUSD.c,H4</ChartTab>
        <Scrollers>
          <svg width="4" height="5"><path d="M3 0v5L0 2.500z" fill="#999" /></svg>
          <svg width="4" height="5"><path d="M1 0v5l3-2.500z" fill="#999" /></svg>
        </Scrollers>
      </ChartTabs>

      <Terminal>
        <Rail>
          <RailClose aria-label="关闭终端">×</RailClose>
          <RailName>终端</RailName>
        </Rail>
        <Sheet>
          <Table>
            <colgroup>{columns.map(([, w], i) => <col key={i} width={w} />)}</colgroup>
            <thead>
              <tr>{columns.map(([name], i) => <Th key={i} scope="col">{name}{i === 1 && <SortMark>/</SortMark>}</Th>)}</tr>
            </thead>
            <tbody>
              {orders.map((o, r) => (
                <Row key={o[0]}>
                  {o.map((v, c) => (
                    <Td key={c} $hit={c === 7 && r < 3}>
                      {c === 0 ? <OrderCell><OrderIcon sell={o[2] === 'sell'} />{v}</OrderCell> : v}
                    </Td>
                  ))}
                </Row>
              ))}
            </tbody>
            <tfoot>
              <SumRow>
                <SumCell colSpan={12}><SumText><SumDot />盈/亏: 132.35  信用额: 0.00  存款: 0.00  取款: 0.00</SumText></SumCell>
                <SumCell>132.35</SumCell>
                <SumCell />
              </SumRow>
            </tfoot>
          </Table>
          <BottomTabs>
            {bottomTabs.map(([name, count]) => (
              <BottomTab key={name} href="#" $on={name === '账户历史'}>{name}{count && <Count>{count}</Count>}</BottomTab>
            ))}
          </BottomTabs>
        </Sheet>
      </Terminal>

      <StatusBar>
        <StatusCell>寻求帮助,请按F1键</StatusCell>
        <StatusCell $w={83}>盯盘图表</StatusCell>
        <StatusCell $w={77} />
        <StatusCell $w={52} />
        <StatusCell $w={52} />
        <StatusCell $w={51} />
        <StatusCell $w={51} />
        <StatusCell $w={48} />
        <StatusCell $w={92}>
          <svg width="17" height="9" aria-hidden="true">
            <path d="M1 0v9M3 0v9M5 0v9M7 0v9M9 0v9M11 0v9M13 0v9M15 0v9" stroke="#7d9a22" strokeWidth="1.400" />
            <path d="M1 8v1M3 7v2M5 6v3M7 6v3M9 5v4M11 4v5M13 4v5M15 3v6" stroke="#1d5a8c" strokeWidth="1.500" />
          </svg>
          <Traffic>6927/9 kb</Traffic>
        </StatusCell>
      </StatusBar>

      <Watermark>
        <svg width="24" height="26" viewBox="0 0 24 26" fill="none" aria-hidden="true">
          <path d="M3 23c4-2 3-6 4-11 1-5 3-8 7-8 5 0 8 3 8 8 0 6-3 8-7 9l-4 4M3 14h7M14 13h3" stroke="#666" strokeWidth="3" transform="translate(1 1)" />
          <path d="M3 23c4-2 3-6 4-11 1-5 3-8 7-8 5 0 8 3 8 8 0 6-3 8-7 9l-4 4M3 14h7M14 13h3" stroke="#fff" strokeWidth="3" />
        </svg>
        @小灵通
      </Watermark>
    </Window>
  );
}
